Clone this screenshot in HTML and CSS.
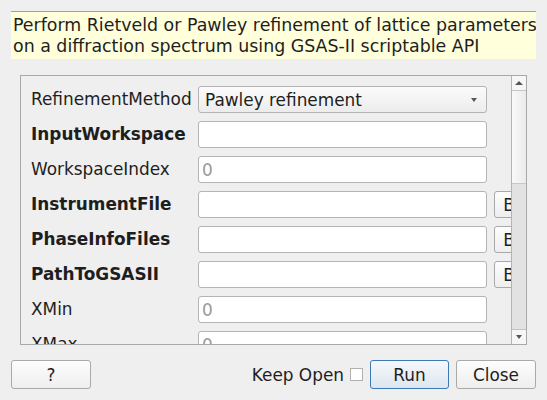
FILE: index.html
```html
<!DOCTYPE html>
<html>
<head>
    <title>PawleyRefinement</title>
    <link rel="stylesheet" href="styles.css">
</head>
<body>
    <div class="dialog">
        <div class="description">
            Perform Rietveld or Pawley refinement of lattice parameters<br>
            on a diffraction spectrum using GSAS-II scriptable API
        </div>

        <div class="scroll-area">
            <div class="properties">
                <div class="row">
                    <label class="name">RefinementMethod</label>
                    <div class="combo">
                        <span>Pawley refinement</span>
                        <span class="arrow-down"></span>
                    </div>
                </div>
                <div class="row">
                    <label class="name mandatory">InputWorkspace</label>
                    <input class="field" type="text">
                </div>
                <div class="row">
                    <label class="name">WorkspaceIndex</label>
                    <input class="field" type="text" placeholder="0">
                </div>
                <div class="row">
                    <label class="name mandatory">InstrumentFile</label>
                    <input class="field" type="text">
                    <button class="button browse">Browse</button>
                </div>
                <div class="row">
                    <label class="name mandatory">PhaseInfoFiles</label>
                    <input class="field" type="text">
                    <button class="button browse">Browse</button>
                </div>
                <div class="row">
                    <label class="name mandatory">PathToGSASII</label>
                    <input class="field" type="text">
                    <button class="button browse">Browse</button>
                </div>
                <div class="row">
                    <label class="name">XMin</label>
                    <input class="field" type="text" placeholder="0">
                </div>
                <div class="row">
                    <label class="name">XMax</label>
                    <input class="field" type="text" placeholder="0">
                </div>
            </div>

            <div class="scrollbar">
                <div class="scroll-btn"><span class="tri-up"></span></div>
                <div class="scroll-handle"></div>
                <div class="scroll-track"></div>
                <div class="scroll-btn bottom"><span class="tri-down"></span></div>
            </div>
        </div>

        <div class="buttons">
            <button class="button">?</button>
            <div class="spacer"></div>
            <label class="keep-open">Keep Open <span class="checkbox"></span></label>
            <button class="button default">Run</button>
            <button class="button">Close</button>
        </div>
    </div>
</body>
</html>
```

FILE: styles.css
```css
body {
    margin: 0;
    background-color: #efefef;
    font-family: "DejaVu Sans", sans-serif;
    font-size: 16.9px;
    color: #1e1e1e;
}

.dialog {
    display: flex;
    flex-direction: column;
    padding: 11px;
    height: 400px;
    box-sizing: border-box;
}

.description {
    height: 48px;
    box-sizing: border-box;
    padding: 3px 2px 0 2px;
    font-size: 17.4px;
    line-height: 21px;
    background-color: #ffffdc;
    border-top: 1px solid #a0a0a0;
    white-space: nowrap;
    overflow: hidden;
}

.scroll-area {
    display: flex;
    height: 270px;
    margin: 16px 9px 0 9px;
    border: 1px solid #a8a8a8;
    box-sizing: border-box;
    overflow: hidden;
}

.properties {
    flex: 1;
    display: flex;
    flex-direction: column;
    gap: 8px;
    padding: 10px 0 0 10px;
    overflow: hidden;
    min-width: 0;
}

.row {
    display: flex;
    align-items: center;
    height: 27px;
    flex-shrink: 0;
}

.name {
    width: 167px;
    flex-shrink: 0;
    white-space: nowrap;
    margin-top: -2px;
}

.mandatory {
    font-weight: bold;
}

.field {
    width: 289px;
    height: 27px;
    box-sizing: border-box;
    flex-shrink: 0;
    margin: 0;
    padding: 0 3px;
    border: 1px solid #b4b4b4;
    border-radius: 3px;
    background-color: #ffffff;
    font-family: inherit;
    font-size: inherit;
}

.field::placeholder {
    color: #9a9a9a;
}

.combo {
    display: flex;
    align-items: center;
    justify-content: space-between;
    width: 289px;
    height: 27px;
    box-sizing: border-box;
    flex-shrink: 0;
    padding: 0 9px 0 6px;
    border: 1px solid #b4b4b4;
    border-radius: 3px;
    background: linear-gradient(#fbfbfb, #ececec);
}

.arrow-down,
.tri-down {
    width: 0;
    height: 0;
    border-left: 3.5px solid transparent;
    border-right: 3.5px solid transparent;
    border-top: 4px solid #555555;
}

.tri-up {
    width: 0;
    height: 0;
    border-left: 4px solid transparent;
    border-right: 4px solid transparent;
    border-bottom: 4px solid #555555;
}

.button {
    width: 80px;
    height: 29px;
    flex-shrink: 0;
    border: 1px solid #a9a9a9;
    border-radius: 3px;
    background: linear-gradient(#fdfdfd, #eeeeee);
    font-family: inherit;
    font-size: inherit;
    color: #1e1e1e;
    padding: 0;
}

.browse {
    height: 27px;
    margin-left: 7px;
}

.button.default {
    width: 79px;
    border-color: #3b7bb5;
    background: linear-gradient(#f5f8fb, #dde6ef);
}

.scrollbar {
    display: flex;
    flex-direction: column;
    width: 15px;
    flex-shrink: 0;
    border-left: 1px solid #b4b4b4;
    box-sizing: border-box;
}

.scroll-btn {
    height: 14px;
    display: flex;
    align-items: center;
    justify-content: center;
    border-bottom: 1px solid #c4c4c4;
    background-color: #f6f6f6;
}

.scroll-btn.bottom {
    border-bottom: none;
    border-top: 1px solid #c4c4c4;
}

.scroll-handle {
    height: 92px;
    background: linear-gradient(to right, #f9f9f9, #ebebeb);
    border-bottom: 1px solid #c8c8c8;
}

.scroll-track {
    flex: 1;
    background-color: #e2e2e2;
}

.buttons {
    display: flex;
    align-items: center;
    margin-top: 15px;
    gap: 7px;
}

.spacer {
    flex: 1;
}

.keep-open {
    display: flex;
    align-items: center;
    gap: 6px;
}

.checkbox {
    width: 13px;
    height: 13px;
    box-sizing: border-box;
    border: 1px solid #b0b0b0;
    background-color: #ffffff;
}
```
